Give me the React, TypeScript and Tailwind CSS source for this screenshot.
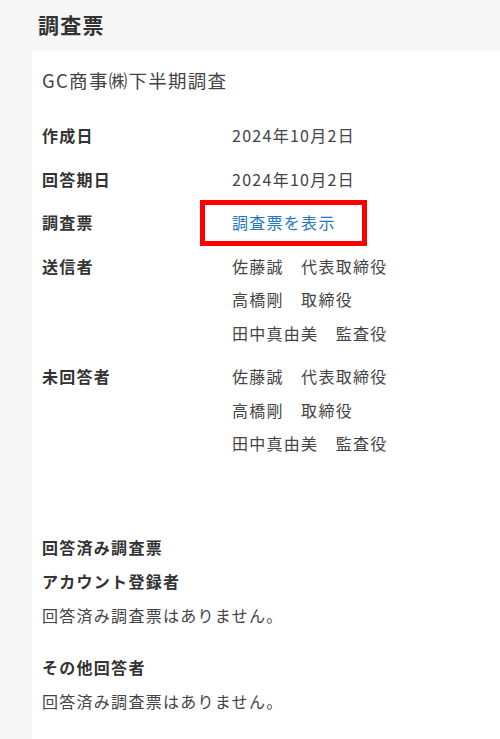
import React from 'react';

type Row = { label: string; values: React.ReactNode[] };

const members = ['佐藤誠　代表取締役', '高橋剛　取締役', '田中真由美　監査役'];

const rows: Row[] = [
  { label: '作成日', values: ['2024年10月2日'] },
  { label: '回答期日', values: ['2024年10月2日'] },
  {
    label: '調査票',
    values: [
      <span key="link" className="relative inline-block text-[#1f78c1]">
        調査票を表示
        <span className="absolute left-[-32px] right-[-31px] top-[-6px] bottom-[-6px] border-[5px] border-[#ff0000]" />
      </span>,
    ],
  },
  { label: '送信者', values: members },
  { label: '未回答者', values: members },
];

const App: React.FC = () => {
  return (
    <div
      className="min-h-[739px] bg-[#f7f7f7] flex flex-col tracking-[0.08em] text-[#444]"
      style={{ fontFamily: '"Noto Sans CJK JP", "Noto Sans", sans-serif' }}
    >
      <div className="h-[51px] pl-[38px] pt-[10px]">
        <h1 className="text-[21px] leading-[28px] font-bold text-[#333]">調査票</h1>
      </div>
      <div className="flex-1 ml-[32px] bg-white pl-[10px] pb-[20px]">
        <div className="pt-[15px] text-[18.5px] leading-[28px]">GC商事㈱下半期調査</div>

        <div className="mt-[25px] flex flex-col gap-[10px] text-[16px] leading-[33.5px]">
          {rows.map((row) => (
            <div key={row.label} className="flex">
              <div className="w-[190px] shrink-0 font-bold text-[#333]">{row.label}</div>
              <div className="flex flex-col">
                {row.values.map((v, i) => (
                  <div key={i}>{v}</div>
                ))}
              </div>
            </div>
          ))}
        </div>

        <div className="mt-[69px] text-[16px] leading-[34px]">
          <div className="font-bold text-[#333]">回答済み調査票</div>
          <div className="font-bold text-[#333]">アカウント登録者</div>
          <div>回答済み調査票はありません。</div>
          <div className="mt-[18px] font-bold text-[#333]">その他回答者</div>
          <div>回答済み調査票はありません。</div>
        </div>
      </div>
    </div>
  );
};

export default App;
